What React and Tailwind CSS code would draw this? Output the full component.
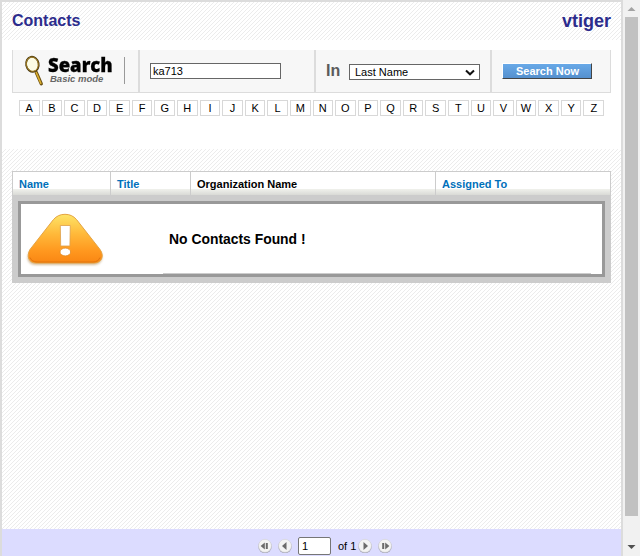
import React from "react";

const STRIPES =
  "bg-white bg-[linear-gradient(135deg,#fff_44%,#ececec_44%,#ececec_56%,#fff_56%)] bg-[length:4px_4px]";
const LETTERS = "ABCDEFGHIJKLMNOPQRSTUVWXYZ".split("");

function Magnifier() {
  return (
    <svg width="22" height="32" viewBox="0 0 22 32" className="shrink-0">
      <path d="M12.300 17.500 L17.300 28.800" stroke="#6b5115" strokeWidth="3.300" strokeLinecap="round" />
      <path d="M12.200 17.500 L16.800 28.300" stroke="#dcae2c" strokeWidth="1.600" strokeLinecap="round" />
      <ellipse cx="8.400" cy="9.300" rx="6.300" ry="7.600" transform="rotate(-12 8.4 9.3)" fill="#fdfce4" stroke="#4a3910" strokeWidth="1.800" />
      <ellipse cx="8.300" cy="9.200" rx="6" ry="7.200" transform="rotate(-12 8.3 9.2)" fill="none" stroke="#b58b25" strokeWidth="0.800" />
    </svg>
  );
}

function Warning() {
  return (
    <svg width="84" height="64" viewBox="0 0 84 64" className="block">
      <defs>
        <linearGradient id="warn" x1="0" y1="0" x2="0" y2="1">
          <stop offset="0" stopColor="#fde468" />
          <stop offset="0.4" stopColor="#ffb93a" />
          <stop offset="0.75" stopColor="#ff981f" />
          <stop offset="1" stopColor="#f98612" />
        </linearGradient>
        <filter id="soft" x="-20%" y="-20%" width="140%" height="150%">
          <feGaussianBlur stdDeviation="1.3" />
        </filter>
      </defs>
      <path d="M44 9 Q51 9 55 14 L79 43 C84 50 80 57 73 57 H15 C7 57 4 50 9 43 L33 14 Q37 9 44 9Z" fill="#b99058" opacity="0.6" filter="url(#soft)" />
      <path d="M44 6.300 Q51 6.300 55.500 11.500 L79 41.500 C84 48.500 80 55 73 55 H15 C8 55 5 48.500 9 41.500 L32.500 11.500 Q37 6.300 44 6.300Z" fill="url(#warn)" stroke="#e5a443" strokeWidth="1" />
      <path d="M9 49.500 Q11 54 16 54 H72 Q77 54 79 49.500" fill="none" stroke="#e0740f" strokeWidth="1" />
      <path d="M39.300 17.500 H49.300 L48.900 38 H39.700Z" fill="#fff" stroke="#dda04a" strokeWidth="0.8" />
      <ellipse cx="44.300" cy="44" rx="5.300" ry="3.900" fill="#fff" stroke="#df8a25" strokeWidth="0.8" />
    </svg>
  );
}

function PageButton({ back, end }) {
  return (
    <svg width="16" height="16" viewBox="0 0 16 16" className="block shrink-0">
      <circle cx="8" cy="8.400" r="6.700" fill="#9c9ca8" />
      <circle cx="8" cy="7.800" r="6.500" fill="#f3f3f3" stroke="#d2d2d6" strokeWidth="0.6" />
      <g fill="#6b6b6b" transform={back ? undefined : "translate(16 0) scale(-1 1)"}>
        <path d={end ? "M3.600 8 L7.800 4.600 V11.400Z" : "M5 8 L9.500 4 V12Z"} />
        {end && <rect x="8.800" y="5" width="2" height="6" />}
      </g>
    </svg>
  );
}

function HeadCell({ children, width, plain }) {
  return (
    <div
      className={`${width} ${plain ? "text-black" : "text-[#0070ba]"} h-[23px] border-r border-[#ccc] bg-[linear-gradient(#fff_0_17px,#f0f1ec_17px,#d9dad6_23px)] pl-[6px] pt-[5px] text-[11px] leading-[15px] font-bold whitespace-nowrap`}
    >
      {children}
    </div>
  );
}

function Header() {
  return (
    <header className={`${STRIPES} flex h-[38px] items-center justify-between pl-[10px] pr-[10px] font-bold text-[#2c2c8c]`}>
      <h1 className="text-[16px] leading-[20px]">Contacts</h1>
      <span className="text-[18px] leading-[20px]">vtiger</span>
    </header>
  );
}

function SearchPanel() {
  return (
    <section className="h-[109px] bg-white px-[10px] pt-[10px]">
      <div className="flex h-[43px] w-[599px] border-x border-b border-[#dcdcdc] bg-[#f7f7f7]">
        <div className="flex w-[127px] shrink-0 border-r-2 border-[#dcdcdc] pl-[11px] pt-[5px]">
          <Magnifier />
          <div className="ml-[2px] w-[76px]">
            <div className="h-[19px] origin-left scale-x-[0.925] font-['Open_Sans',sans-serif] text-[20px] leading-[20px] font-extrabold whitespace-nowrap text-black [-webkit-text-stroke:0.3px_black]">Search</div>
            <div className="pl-[2px] text-[9.500px] leading-[9px] font-bold whitespace-nowrap text-[#666] italic">Basic mode</div>
          </div>
          <div className="mt-[2px] h-[27px] w-px bg-[#999]" />
        </div>
        <div className="w-[176px] shrink-0 border-r-2 border-[#dcdcdc] pl-[10px] pt-[13px]">
          <input defaultValue="ka713" className="block h-[16px] w-[131px] border border-[#666] bg-white px-[2px] text-[11px] leading-[14px] text-black outline-none" />
        </div>
        <div className="flex w-[176px] shrink-0 border-r-2 border-[#dcdcdc] pl-[10px] pt-[11px]">
          <span className="w-[23px] text-[16px] leading-[20px] font-bold text-[#5b5b5b]">In</span>
          <div className="mt-[3px] flex h-[16px] w-[131px] items-center justify-between border border-[#666] bg-white pr-[4px] pl-[5px] text-[11px] leading-[14px] text-black">
            Last Name
            <svg width="10" height="7" viewBox="0 0 10 7"><path d="M1 1.500 L5 5.300 L9 1.500" fill="none" stroke="#111" strokeWidth="2" /></svg>
          </div>
        </div>
        <div className="pl-[10px] pt-[13px]">
          <button className="block h-[16px] w-[90px] border border-t-white border-r-[#444] border-b-[#444] border-l-white bg-linear-to-b from-[#68a9e8] to-[#5590ce] pl-[1px] text-[11px] leading-[14px] font-bold whitespace-nowrap text-white">Search Now</button>
        </div>
      </div>
      <nav className="mt-[7px] ml-[7px] flex w-[585px] gap-[2px]">
        {LETTERS.map((l) => (
          <a key={l} className="h-[16px] min-w-0 flex-1 border border-[#d8d8d8] bg-white text-center text-[11px] leading-[14px] text-black">{l}</a>
        ))}
      </nav>
    </section>
  );
}

function Results() {
  return (
    <section className={`${STRIPES} min-h-0 flex-1 px-[10px] pt-[22px]`}>
      <div className="h-[112px] w-[599px] bg-[#ccc]">
        <div className="flex h-[24px] border-x border-t border-[#ccc]">
          <HeadCell width="w-[98px]">Name</HeadCell>
          <HeadCell width="w-[80px]">Title</HeadCell>
          <HeadCell width="w-[245px]" plain>Organization Name</HeadCell>
          <div className="flex-1 [&>div]:border-r-0">
            <HeadCell width="w-full">Assigned To</HeadCell>
          </div>
        </div>
        <div className="mx-[6px] mt-[6px] flex h-[76px] border-[3px] border-[#999] bg-white">
          <div className="w-[142px] shrink-0 pt-[4px]"><Warning /></div>
          <div className="h-[70px] w-[428px] border-b border-[#ccc] pl-[6px] text-[13.900px] leading-[70px] font-bold text-black">No Contacts Found !</div>
        </div>
      </div>
    </section>
  );
}

function Pager() {
  return (
    <footer className="flex h-[27px] items-start bg-[#dcdcff] pl-[255px] text-[11px] text-black">
      <div className="mt-[9px]"><PageButton back end /></div>
      <div className="mt-[9px] ml-[4px]"><PageButton back /></div>
      <input defaultValue="1" className="mt-[8px] ml-[5px] block h-[18px] w-[33px] rounded-[2px] border border-[#767676] bg-white px-[3px] text-[11px] outline-none" />
      <span className="mt-[10px] ml-[7px] w-[19px] leading-[14px] whitespace-nowrap">of 1</span>
      <div className="mt-[9px]"><PageButton /></div>
      <div className="mt-[9px] ml-[4px]"><PageButton end /></div>
    </footer>
  );
}

function Scrollbar() {
  return (
    <aside className="flex w-[17px] shrink-0 flex-col items-center bg-[#f1f1f1]">
      <svg width="17" height="17" viewBox="0 0 17 17"><path d="M4.500 11 L8.500 7 L12.500 11Z" fill="#a3a3a3" /></svg>
      <div className="mr-px h-[499px] w-[13px] bg-[#c1c1c1]" />
      <svg className="mt-auto" width="17" height="17" viewBox="0 0 17 17"><path d="M4.500 6 L8.500 10 L12.500 6Z" fill="#505050" /></svg>
    </aside>
  );
}

export default function App() {
  return (
    <div className="flex h-[556px] w-[640px] overflow-hidden bg-[#f1f1f1] font-['Liberation_Sans',Arial,sans-serif]">
      <main className="flex w-[623px] shrink-0 flex-col border-x-2 border-t-2 border-[#dcdcdc] bg-white">
        <Header />
        <SearchPanel />
        <Results />
        <Pager />
      </main>
      <Scrollbar />
    </div>
  );
}
